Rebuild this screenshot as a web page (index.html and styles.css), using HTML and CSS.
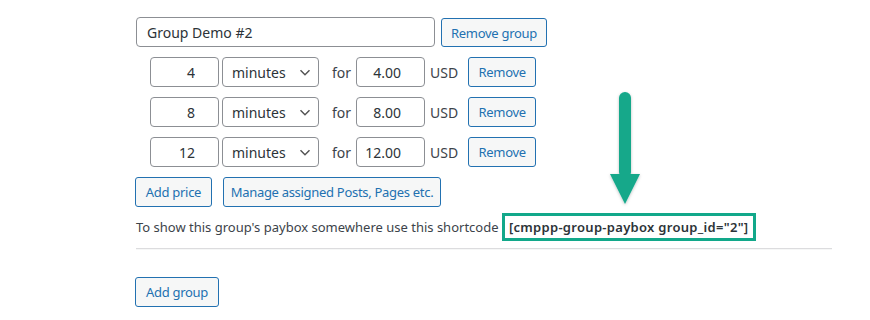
FILE: index.html
```html
<!DOCTYPE html>
<html lang="en">
<head>
    <meta charset="UTF-8">
    <meta name="viewport" content="width=device-width, initial-scale=1.0">
    <title>Price groups</title>
    <link rel="stylesheet" href="styles.css">
</head>
<body>
    <div class="wrap">
        <div class="group">
            <div class="group-head">
                <input class="group-name" type="text" value="Group Demo #2">
                <button class="button">Remove group</button>
            </div>
            <div class="prices">
                <div class="price-row">
                    <input class="num" type="text" value="4">
                    <select class="unit"><option>minutes</option></select>
                    <span class="label-for">for</span>
                    <input class="amount" type="text" value="4.00">
                    <span class="currency">USD</span>
                    <button class="button">Remove</button>
                </div>
                <div class="price-row">
                    <input class="num" type="text" value="8">
                    <select class="unit"><option>minutes</option></select>
                    <span class="label-for">for</span>
                    <input class="amount" type="text" value="8.00">
                    <span class="currency">USD</span>
                    <button class="button">Remove</button>
                </div>
                <div class="price-row">
                    <input class="num" type="text" value="12">
                    <select class="unit"><option>minutes</option></select>
                    <span class="label-for">for</span>
                    <input class="amount" type="text" value="12.00">
                    <span class="currency">USD</span>
                    <button class="button">Remove</button>
                </div>
            </div>
            <div class="actions">
                <button class="button">Add price</button>
                <button class="button">Manage assigned Posts, Pages etc.</button>
            </div>
            <p class="shortcode-line">To show this group's paybox somewhere use this shortcode <span class="shortcode">[cmppp-group-paybox group_id="2"]</span></p>
        </div>
        <hr class="sep">
        <button class="button">Add group</button>

        <!-- annotation arrow -->
        <svg class="arrow" width="40" height="120" viewBox="0 0 40 120">
            <defs>
                <filter id="sh" x="-50%" y="-20%" width="200%" height="140%">
                    <feDropShadow dx="0" dy="1" stdDeviation="1.5" flood-color="#000" flood-opacity="0.25"/>
                </filter>
            </defs>
            <g filter="url(#sh)" fill="#12a88a">
                <rect x="14" y="2" width="12" height="86" rx="6"/>
                <polygon points="5,84 35,84 20,114"/>
            </g>
        </svg>
    </div>
</body>
</html>
```

FILE: styles.css
```css
body {
    margin: 0;
    padding: 0;
    background-color: #ffffff;
    font-family: "Noto Sans", "Open Sans", sans-serif;
    font-size: 13px;
    color: #3c434a;
}
.wrap {
    position: relative;
    padding: 17px 0 0 135px;
}
input, select, button {
    font-family: inherit;
    box-sizing: border-box;
    margin: 0;
}
input[type="text"], select {
    height: 30px;
    border: 1px solid #8c8f94;
    border-radius: 4px;
    background-color: #fff;
    color: #2c3338;
    font-size: 14px;
    padding: 0 8px;
}
.button {
    height: 30px;
    padding: 0;
    border: 1px solid #2271b1;
    border-radius: 3px;
    background-color: #f6f7f7;
    color: #2271b1;
    font-size: 13px;
    letter-spacing: -0.3px;
    white-space: nowrap;
    text-align: center;
    cursor: pointer;
}
.group-head {
    display: flex;
    align-items: center;
    gap: 6px;
    padding-left: 1px;
}
.group-name {
    width: 299px;
    padding-left: 10px !important;
}
.group-head .button {
    height: 29px;
    margin-top: 1px;
    width: 106px;
}
.prices {
    display: flex;
    flex-direction: column;
    gap: 10px;
    margin: 10px 0 0 15px;
}
.price-row {
    display: flex;
    align-items: center;
}
.num, .amount {
    width: 69px;
    text-align: right;
    padding-right: 23px !important;
}
.unit {
    width: 97px;
    margin-left: 3px;
    appearance: none;
    -webkit-appearance: none;
    padding-left: 9px;
    background-image: url("data:image/svg+xml;charset=US-ASCII,%3Csvg%20width%3D%2220%22%20height%3D%2220%22%20xmlns%3D%22http%3A%2F%2Fwww.w3.org%2F2000%2Fsvg%22%3E%3Cpath%20d%3D%22M5%208l5%205%205-5%22%20fill%3D%22none%22%20stroke%3D%22%23555%22%20stroke-width%3D%221.6%22%2F%3E%3C%2Fsvg%3E");
    background-repeat: no-repeat;
    background-position: right 4px top 50%;
    background-size: 18px 18px;
}
.label-for {
    margin: 0 5px 0 13px;
    font-size: 14px;
}
.currency {
    margin: 0 10px 0 5px;
    font-size: 14px;
}
.price-row .button {
    width: 68px;
}
.actions {
    display: flex;
    gap: 11px;
    margin-top: 10px;
}
.actions .button:first-child {
    width: 77px;
}
.actions .button:last-child {
    width: 218px;
}
.shortcode-line {
    margin: 6px 0 0 1px;
    font-size: 13px;
    line-height: 28px;
}
.shortcode {
    display: inline-block;
    border: 3px solid #12a88a;
    padding: 0 5px 0 4px;
    line-height: 22px;
    font-weight: 600;
    letter-spacing: 0.3px;
    color: #2c3338;
}
.sep {
    width: 696px;
    margin: 7px 0 0 1px;
    border: 0;
    border-top: 1px solid #dcdcde;
    border-bottom: 1px solid #f6f7f7;
    height: 0;
}
.sep + .button {
    margin-top: 27px;
    width: 84px;
}
.arrow {
    position: absolute;
    left: 605px;
    top: 90px;
}
```
